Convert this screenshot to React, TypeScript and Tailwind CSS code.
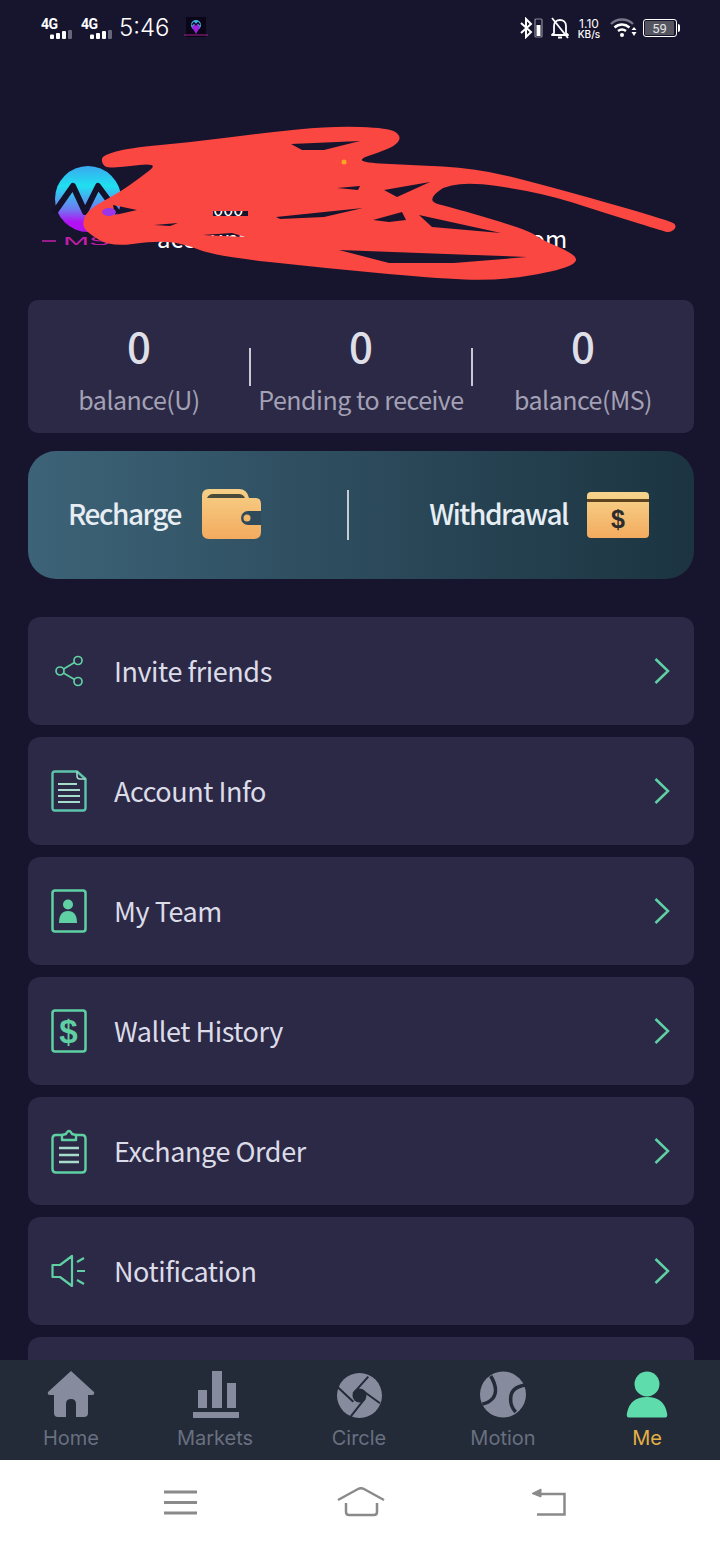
import React from 'react';

const cjk = { fontFamily: '"Noto Sans CJK SC", "Noto Sans", sans-serif' };

function Signal() {
  return (
    <div className="flex flex-col w-[38px] text-white">
      <span className="text-[14px] leading-[13px] font-bold font-['Roboto',sans-serif] -ml-[1px] tracking-[-0.5px]">4G</span>
      <svg width="22" height="9" viewBox="0 0 22 9" className="ml-[8px] -mt-[1px]">
        <rect x="0" y="4.500" width="4" height="4.500" rx="1" fill="#fff" />
        <rect x="6" y="3" width="4" height="6" rx="1" fill="#fff" />
        <rect x="12" y="1" width="4" height="8" rx="1" fill="#fff" />
        <rect x="18" y="0" width="4" height="9" rx="1" fill="#66667a" />
      </svg>
    </div>
  );
}

function StatusBar() {
  return (
    <div className="h-[56px] flex items-center justify-between pl-[42px] pr-[40px] text-white">
      <div className="flex items-center">
        <Signal />
        <div className="w-[2px]" />
        <Signal />
        <span className="-ml-[1px] text-[24px] leading-[30px] font-['Inter',sans-serif] font-light">5:46</span>
        <svg width="24" height="22" viewBox="0 0 24 22" className="ml-[14px]">
          <rect x="2" y="0" width="20" height="20" fill="#0a0618" />
          <circle cx="12" cy="8" r="5" fill="#3fb4e8" />
          <path d="M12 6 L8 10 L12 17 L16 10 Z" fill="#a020e0" />
          <path d="M8 8 L10 5.500 L12 8 L14 5.500 L16 8" stroke="#10102a" strokeWidth="1.400" fill="none" />
          <path d="M0 18 H24" stroke="#a0208c" strokeWidth="1" />
        </svg>
      </div>
      <div className="flex items-center">
        <svg width="24" height="22" viewBox="0 0 24 22" fill="none">
          <path d="M1 6 L11 15 L6 20 V2 L11 7 L1 16" stroke="#fff" strokeWidth="2" />
          <rect x="15" y="2" width="7" height="18" rx="1" stroke="#8b8b98" strokeWidth="1.200" />
          <rect x="16.500" y="8" width="4" height="11" fill="#fff" />
        </svg>
        <svg width="20" height="24" viewBox="0 0 20 24" fill="none" className="ml-[6px]">
          <path d="M4 17 V10 C4 6 7 4 10 4 C13 4 16 6 16 10 V17 L18 19 H2 Z" stroke="#fff" strokeWidth="1.800" strokeLinejoin="round" />
          <path d="M8 21.500 H12" stroke="#fff" strokeWidth="2" />
          <path d="M2 2 L18 22" stroke="#fff" strokeWidth="1.800" />
        </svg>
        <div className="ml-[7px] w-[24px] flex flex-col items-center font-['Inter',sans-serif] text-[12px] leading-[11px]">
          <span>1.10</span>
          <span className="text-[10px] leading-[10px] font-medium">KB/s</span>
        </div>
        <svg width="28" height="20" viewBox="0 0 28 20" fill="none" className="ml-[9px]">
          <path d="M1 6 C7 0 17 0 23 6" stroke="#77778a" strokeWidth="2.400" />
          <path d="M4.500 9.500 C9 5.500 15 5.500 19.500 9.500" stroke="#fff" strokeWidth="2.400" />
          <path d="M8 13 C10.500 11 13.500 11 16 13" stroke="#fff" strokeWidth="2.400" />
          <circle cx="12" cy="17" r="2" fill="#fff" />
          <path d="M24 9 L26.500 12 H21.500 Z M24 18 L21.500 14 H26.500 Z" fill="#fff" />
        </svg>
        <div className="ml-[5px] flex items-center">
          <div className="w-[34px] h-[18px] rounded-[3px] border border-white p-[1px]">
            <div className="w-[29px] h-full bg-[#55555f] rounded-[1px] flex items-center justify-center text-[13px] leading-none font-['Roboto',sans-serif] text-[#e4e4e8]">
              59
            </div>
          </div>
          <div className="w-[2px] h-[8px] bg-white ml-[1px] rounded-r-sm" />
        </div>
      </div>
    </div>
  );
}

// rounds the hand drawn outline through the midpoints of its corners
function smooth(pts: number[][]) {
  const mid = (a: number[], b: number[]) => [(a[0] + b[0]) / 2, (a[1] + b[1]) / 2];
  const start = mid(pts[pts.length - 1], pts[0]);
  let d = `M${start[0]} ${start[1]}`;
  pts.forEach((p, i) => {
    const m = mid(p, pts[(i + 1) % pts.length]);
    d += ` Q${p[0]} ${p[1]} ${m[0]} ${m[1]}`;
  });
  return d + ' Z';
}

const outline = [
  [101, 160], [104, 155], [128, 148], [193, 142], [263, 133], [332, 126], [389, 128], [400, 135], [399, 142],
  [389, 149], [350, 162], [410, 165], [475, 168], [540, 184], [672, 221], [677, 227], [670, 233], [660, 230],
  [605, 213], [540, 192], [454, 180], [425, 201], [454, 208], [528, 230], [542, 240], [566, 250], [580, 260],
  [562, 270], [497, 281], [432, 278], [324, 268], [215, 256], [182, 243], [154, 241], [111, 247], [86, 232],
  [82, 222], [89, 209], [120, 192], [141, 177], [159, 163], [120, 167], [105, 168],
];

const holes = [
  'M291 144 L360 141 L324 150 L302 150 Z',
  'M384 190 L430 182 L397 197 Z',
  'M337 188 L360 186 L358 190 Z',
  'M276 217 L363 208 L324 217 L280 219 Z',
  'M373 220 L402 212 L406 220 L389 222 Z',
  'M419 215 L501 233 L432 227 Z',
  'M339 250 L527 257 L454 263 L389 263 Z',
  'M113 205 L137 210 L115 215 Z',
  'M154 225 L178 223 L170 226 Z',
  'M202 235 L232 233 L245 237 Z',
  'M213 211 L248 211 L248 216 L213 216 Z',
];

function Scribble() {
  return (
    <svg className="absolute left-0 top-0 w-[720px] h-[244px]" viewBox="0 56 720 244">
      <path fill="#fb4741" fillRule="evenodd" d={smooth(outline) + ' ' + holes.join(' ')} />
      <ellipse cx="109" cy="212" rx="7" ry="4" fill="#9a35e8" />
      <circle cx="344" cy="162" r="2.500" fill="#f5a623" />
    </svg>
  );
}

function Logo() {
  return (
    <svg width="80" height="84" viewBox="40 165 80 84" className="shrink-0">
      <defs>
        <linearGradient id="logoGrad" x1="0" y1="0" x2="0" y2="1">
          <stop offset="0" stopColor="#3aa8ee" />
          <stop offset="0.3" stopColor="#1fe0f0" />
          <stop offset="0.65" stopColor="#6d7cf2" />
          <stop offset="0.85" stopColor="#b112f2" />
        </linearGradient>
      </defs>
      <circle cx="88" cy="199" r="33" fill="url(#logoGrad)" />
      <path d="M54 213 L73 186 L85 212 L98 186 L118 213" stroke="#14122a" strokeWidth="6" fill="none" strokeLinejoin="round" />
      <path d="M42 241 H56" stroke="#c41ea8" strokeWidth="1.500" />
      <text x="63" y="245" fontSize="10" textLength="47" lengthAdjust="spacingAndGlyphs" fill="#c41ea8" fontFamily="Liberation Sans, sans-serif">MS</text>
    </svg>
  );
}

function Header() {
  return (
    <div className="relative h-[244px] flex items-start pl-[40px] pt-[109px]">
      <Logo />
      <div className="ml-[37px] pt-[29px] text-white whitespace-nowrap" style={cjk}>
        <div className="text-[18px] leading-[28px]">user00000</div>
        <div className="text-[24px] leading-[32px] tracking-[0.25px]">account0000000000000@gmail.com</div>
      </div>
      <Scribble />
    </div>
  );
}

function Stat({ value, label }: { value: string; label: string }) {
  return (
    <div className="w-[222px] flex flex-col items-center">
      <span className="text-[42px] leading-[48px] font-medium text-[#dfdfe8]" style={cjk}>{value}</span>
      <span className="mt-[12px] text-[25px] leading-[36px] tracking-[-0.5px] text-[#a3a1b4] whitespace-nowrap" style={cjk}>{label}</span>
    </div>
  );
}

function Stats() {
  return (
    <div className="relative h-[133px] rounded-[10px] bg-[#2c2947] flex pt-[21px]">
      <Stat value="0" label="balance(U)" />
      <Stat value="0" label="Pending to receive" />
      <Stat value="0" label="balance(MS)" />
      <div className="absolute left-[221px] top-[48px] w-[2px] h-[38px] bg-[#c9c9d4]" />
      <div className="absolute left-[443px] top-[48px] w-[2px] h-[38px] bg-[#c9c9d4]" />
    </div>
  );
}

function WalletIcon() {
  return (
    <svg width="62" height="52" viewBox="0 0 62 52">
      <defs>
        <linearGradient id="walletGrad" x1="0" y1="0" x2="0" y2="1">
          <stop offset="0" stopColor="#f6cf86" />
          <stop offset="1" stopColor="#f3ab5e" />
        </linearGradient>
      </defs>
      <path d="M1 8 Q1 1 8 1 H38 Q46 1 48 10 H55 Q60 10 60 16 V44 Q60 51 53 51 H8 Q1 51 1 44 Z" fill="url(#walletGrad)" />
      <path d="M6 10 Q8 6 12 6 H38 Q42 6 44 10 Z" fill="#4a4a3a" />
      <path d="M60 23 H47 A7 7 0 0 0 47 37 H60 Z" fill="#2f4a5a" />
      <circle cx="46" cy="30" r="3.500" fill="#f2b868" />
    </svg>
  );
}

function CashIcon() {
  return (
    <svg width="62" height="46" viewBox="0 0 62 46">
      <defs>
        <linearGradient id="cashGrad" x1="0" y1="0" x2="0" y2="1">
          <stop offset="0" stopColor="#f6d48c" />
          <stop offset="1" stopColor="#f3ab5e" />
        </linearGradient>
      </defs>
      <rect x="0" y="0" width="62" height="46" rx="4" fill="url(#cashGrad)" />
      <rect x="0" y="7" width="62" height="3" fill="#5c4420" />
      <text x="31" y="36" textAnchor="middle" fontSize="25" fontWeight="700" fill="#2c2c2c" fontFamily="Liberation Sans, sans-serif">$</text>
    </svg>
  );
}

function Actions() {
  return (
    <div className="relative mt-[18px] h-[128px] rounded-[28px] bg-gradient-to-r from-[#3d6378] to-[#1c3441] flex items-center justify-between pl-[40px] pr-[45px]">
      <div className="flex items-center">
        <span className="pb-[4px] text-[28px] font-medium text-[#e6edf3] tracking-[-1.45px]" style={cjk}>Recharge</span>
        <div className="ml-[20px] mb-[2px]"><WalletIcon /></div>
      </div>
      <div className="flex items-center">
        <span className="pb-[4px] text-[28px] font-medium text-[#e6edf3] tracking-[-1.45px]" style={cjk}>Withdrawal</span>
        <div className="ml-[19px]"><CashIcon /></div>
      </div>
      <div className="absolute left-[319px] top-[39px] w-[2px] h-[50px] bg-[#c5ccd4]" />
    </div>
  );
}

const green = '#5fd0a4';

function ShareIcon() {
  return (
    <svg width="36" height="36" viewBox="0 0 36 36" fill="none" stroke={green} strokeWidth="1.700">
      <circle cx="27" cy="7.500" r="4" />
      <circle cx="9" cy="18" r="4" />
      <circle cx="27" cy="28.500" r="4" />
      <path d="M12.500 16 L23.500 9.500 M12.500 20 L23.500 26.500" />
    </svg>
  );
}

function DocIcon() {
  return (
    <svg width="36" height="42" viewBox="0 0 36 42" fill="none" stroke="#5cc4ac" strokeWidth="2.400">
      <path d="M4 1.500 H26 L34.500 9 V38 Q34.500 40.500 32 40.500 H4 Q1.500 40.500 1.500 38 V4 Q1.500 1.500 4 1.500 Z" strokeLinejoin="round" />
      <path d="M26 1.500 V6 Q26 9 29 9 H34.500" strokeWidth="1.500" stroke="#a5dccb" />
      <path d="M7 14 H26 M7 20 H29 M7 26 H29 M7 32 H29" stroke="#a5dccb" strokeWidth="2.200" />
    </svg>
  );
}

function BadgeIcon() {
  return (
    <svg width="36" height="44" viewBox="0 0 36 44" fill="none">
      <rect x="1.500" y="1.500" width="33" height="41" rx="2.500" stroke={green} strokeWidth="2.500" />
      <circle cx="17" cy="15.500" r="5" fill={green} />
      <path d="M8 34 Q8 22 17 22 Q26 22 26 34 Z" fill={green} />
    </svg>
  );
}

function DollarIcon() {
  return (
    <svg width="36" height="44" viewBox="0 0 36 44" fill="none">
      <rect x="1.500" y="1.500" width="33" height="41" rx="2.500" stroke={green} strokeWidth="2.500" />
      <text x="17.500" y="34" textAnchor="middle" fontSize="33" fontWeight="700" fill={green} fontFamily="Liberation Sans, sans-serif">$</text>
    </svg>
  );
}

function ClipboardIcon() {
  return (
    <svg width="36" height="46" viewBox="0 0 36 46" fill="none" stroke={green} strokeWidth="2.400">
      <path d="M11 7 H5 Q1.500 7 1.500 10.500 V41 Q1.500 44.500 5 44.500 H31 Q34.500 44.500 34.500 41 V10.500 Q34.500 7 31 7 H25" />
      <path d="M11 12 V7 L15 6 Q18 0 21 6 L25 7 V12 Z" strokeLinejoin="round" />
      <path d="M8 20 H28 M8 27 H28 M8 34 H28" stroke="#a5dccb" strokeWidth="2.500" />
    </svg>
  );
}

function SpeakerIcon() {
  return (
    <svg width="36" height="34" viewBox="0 0 36 34" fill="none" stroke={green} strokeWidth="2.200">
      <path d="M1.500 11 H9 L21 2 V32 L9 23 H1.500 Z" strokeLinejoin="round" />
      <path d="M26 8 L33 4 M26 17 H34 M26 26 L33 30" />
    </svg>
  );
}

function MenuRow({ icon, label }: { icon?: React.ReactNode; label?: string }) {
  return (
    <div className="h-[108px] shrink-0 rounded-[12px] bg-[#2c2947] flex items-center pl-[23px] pr-[23px]">
      <div className="w-[36px] h-[46px] flex items-center justify-center">{icon}</div>
      <span className="ml-[27px] flex-1 text-[27px] leading-[36px] tracking-[-0.45px] text-[#dcdce8]" style={cjk}>{label}</span>
      {label && (
        <svg width="18" height="28" viewBox="0 0 18 28" fill="none">
          <path d="M2.500 2 L15 14 L2.500 26" stroke={green} strokeWidth="2.500" />
        </svg>
      )}
    </div>
  );
}

function HomeNavIcon() {
  return (
    <svg width="48" height="48" viewBox="0 0 48 48">
      <path d="M24 0 L47 21 Q48 24 45 24 H41 V42 Q41 46 37 46 H29 V33 Q29 28 24 28 Q19 28 19 33 V46 H11 Q7 46 7 42 V24 H3 Q0 24 1 21 Z" fill="#868b9e" />
    </svg>
  );
}

function MarketsNavIcon() {
  return (
    <svg width="48" height="48" viewBox="0 0 48 48" fill="#868b9e">
      <rect x="7" y="19" width="9" height="18" />
      <rect x="21" y="0" width="10" height="37" />
      <rect x="36" y="12" width="9" height="25" />
      <rect x="2" y="41" width="46" height="6" />
    </svg>
  );
}

function CircleNavIcon() {
  return (
    <svg width="48" height="48" viewBox="0 0 48 48">
      <circle cx="24.500" cy="24.500" r="22.500" fill="#868b9e" />
      <circle cx="24.500" cy="24.500" r="7" fill="#232a38" />
      <path d="M33.300 5.700 L18.300 22.300 M45 32.300 L26.700 19 M15 46.300 L30 27.300 M2.300 15.700 L18.300 30.700" stroke="#232a38" strokeWidth="2" />
    </svg>
  );
}

function MotionNavIcon() {
  return (
    <svg width="48" height="48" viewBox="0 0 48 48" fill="none">
      <circle cx="24" cy="23.500" r="23" fill="#868b9e" />
      <path d="M11.700 5 Q20 19 14 27 Q10 32 3.300 33" stroke="#232a38" strokeWidth="3.500" />
      <path d="M46.700 14 Q32 16 31.700 27 Q31 35 36.700 41" stroke="#232a38" strokeWidth="3.500" />
    </svg>
  );
}

function MeNavIcon() {
  return (
    <svg width="48" height="48" viewBox="0 0 48 48" fill="#5fdcab">
      <circle cx="24" cy="13" r="12.500" />
      <path d="M6 46.500 Q3 46.500 4 42 Q7 26 24 26 Q41 26 44 42 Q45 46.500 42 46.500 Z" />
    </svg>
  );
}

function NavItem({ icon, label, active }: { icon: React.ReactNode; label: string; active?: boolean }) {
  return (
    <div className="w-[144px] flex flex-col items-center">
      {icon}
      <span className={`mt-[5px] text-[20px] leading-[28px] font-['Inter',sans-serif] ${active ? 'text-[#e3b045]' : 'text-[#697080]'}`}>
        {label}
      </span>
    </div>
  );
}

function BottomNav() {
  return (
    <div className="h-[100px] shrink-0 bg-[#232a38] flex pt-[11px] pr-[1px]">
      <div className="-ml-[1px] flex">
        <NavItem icon={<HomeNavIcon />} label="Home" />
        <NavItem icon={<MarketsNavIcon />} label="Markets" />
        <NavItem icon={<CircleNavIcon />} label="Circle" />
        <NavItem icon={<MotionNavIcon />} label="Motion" />
        <NavItem icon={<MeNavIcon />} label="Me" active />
      </div>
    </div>
  );
}

function SystemBar() {
  return (
    <div className="h-[84px] shrink-0 bg-white flex items-center pl-[164px]">
      <svg width="34" height="26" viewBox="0 0 34 26" stroke="#8a8a8a" strokeWidth="3">
        <path d="M0 3 H33 M0 13.500 H33 M0 24 H33" />
      </svg>
      <svg width="48" height="30" viewBox="0 0 48 30" fill="none" stroke="#8a8a8a" strokeWidth="2.500" className="ml-[139px]">
        <path d="M1 13 L21 2 Q24 0.500 27 2 L47 13" />
        <path d="M9 16 V25 Q9 28 12 28 H37 Q40 28 40 25 V16" />
      </svg>
      <svg width="34" height="28" viewBox="0 0 34 28" fill="none" stroke="#8a8a8a" strokeWidth="2.500" className="ml-[147px]">
        <path d="M6 6 H32.500 V26.500 H5" />
        <path d="M0 5.500 L9 1 V9 Z" fill="#8a8a8a" strokeWidth="1" />
      </svg>
    </div>
  );
}

export default function App() {
  return (
    <div className="w-[720px] h-[1544px] flex flex-col overflow-hidden bg-[#17142e]">
      <StatusBar />
      <Header />
      <div className="flex-1 min-h-0 overflow-hidden pl-[28px] pr-[26px]">
        <Stats />
        <Actions />
        <div className="mt-[38px] flex flex-col gap-[12px]">
          <MenuRow icon={<ShareIcon />} label="Invite friends" />
          <MenuRow icon={<DocIcon />} label="Account Info" />
          <MenuRow icon={<BadgeIcon />} label="My Team" />
          <MenuRow icon={<DollarIcon />} label="Wallet History" />
          <MenuRow icon={<ClipboardIcon />} label="Exchange Order" />
          <MenuRow icon={<SpeakerIcon />} label="Notification" />
          <MenuRow />
        </div>
      </div>
      <BottomNav />
      <SystemBar />
    </div>
  );
}
